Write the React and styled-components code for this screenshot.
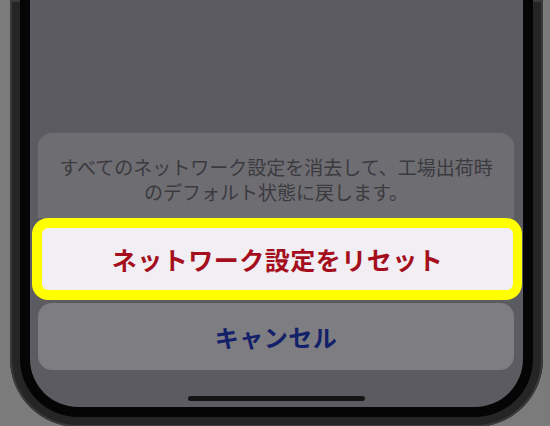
import React from 'react'
import styled, { createGlobalStyle } from 'styled-components'

const GlobalStyle = createGlobalStyle`
    html, body {
        margin: 0;
        padding: 0;
        overflow: hidden;
        background: #7b7b7b;
    }
`

const Page = styled.div`
    width: 550px;
    height: 426px;
    background: #7b7b7b;
    overflow: hidden;
    font-family: "Noto Sans CJK JP", "Noto Sans", sans-serif;
`

const Frame = styled.div`
    margin-left: 10px;
    width: 533px;
    padding: 0 10px 10px;
    box-sizing: border-box;
    background: #252525;
    border-radius: 0 0 68px 68px;
    box-shadow: inset 0 0 0 2px #3a3a3a;
`

const Bezel = styled.div`
    padding: 0 10px 10px;
    background: #050505;
    border-radius: 0 0 58px 58px;
`

const Screen = styled.div`
    height: 407px;
    box-sizing: border-box;
    padding: 133px 9px 0 8px;
    display: flex;
    flex-direction: column;
    background: #5c5b61;
    border-radius: 0 0 48px 48px;
`

const Message = styled.div`
    height: 85px;
    box-sizing: border-box;
    padding-top: 21px;
    background: #6e6d72;
    border-radius: 14px 14px 0 0;
    color: #3b3a3f;
    font-size: 19px;
    line-height: 25px;
    text-align: center;
`

const Highlight = styled.div`
    margin: 0 -8px 0 -6px;
    height: 82px;
    box-sizing: border-box;
    border: 10px solid #ffff00;
    border-right-width: 9px;
    border-radius: 16px;
    background: #ffff00;
`

const Action = styled.button`
    width: 100%;
    height: ${p => p.$height}px;
    border: none;
    padding: 0;
    display: flex;
    align-items: center;
    justify-content: center;
    background: ${p => p.$bg};
    border-radius: ${p => p.$radius}px;
    color: ${p => p.$color};
    font-family: inherit;
    font-size: ${p => p.$size}px;
    font-weight: 700;
    letter-spacing: ${p => p.$spacing}px;
`

const Cancel = styled.div`
    margin-top: 3px;
`

const HomeBar = styled.div`
    align-self: center;
    margin: 26px 0 0 1px;
    width: 177px;
    height: 5px;
    border-radius: 3px;
    background: #151515;
`

export default function App() {
    return (
        <Page>
            <GlobalStyle />
            <Frame>
                <Bezel>
                    <Screen>
                        <Message>
                            すべてのネットワーク設定を消去して、工場出荷時<br />
                            のデフォルト状態に戻します。
                        </Message>
                        <Highlight>
                            <Action $height={62} $bg="#f1eff4" $radius={6} $color="#a50f1d" $size={25} $spacing={0.5}>
                                ネットワーク設定をリセット
                            </Action>
                        </Highlight>
                        <Cancel>
                            <Action $height={67} $bg="#7e7d81" $radius={14} $color="#13206a" $size={24} $spacing={0.5}>
                                キャンセル
                            </Action>
                        </Cancel>
                        <HomeBar />
                    </Screen>
                </Bezel>
            </Frame>
        </Page>
    )
}
